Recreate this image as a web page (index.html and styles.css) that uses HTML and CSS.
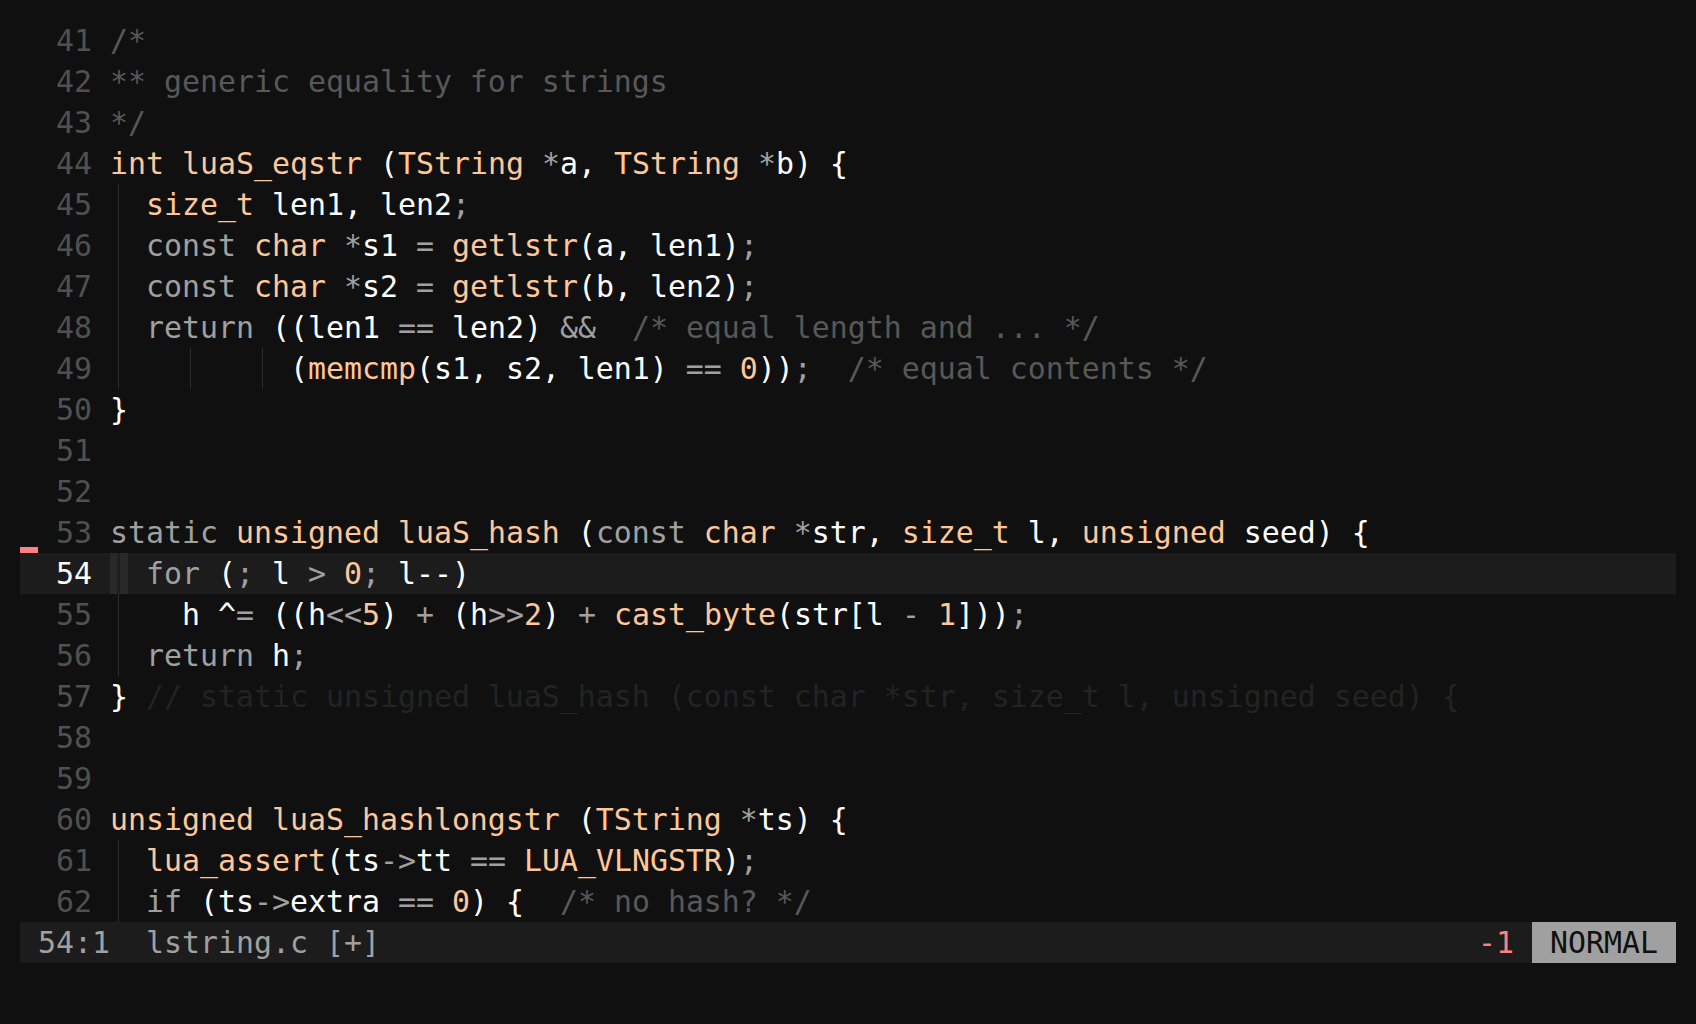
FILE: index.html
```html
<!DOCTYPE html>
<html>
<head>
<meta charset="utf-8">
<link rel="stylesheet" href="styles.css">
</head>
<body>
<div class="editor">
  <div class="buffer">
    <div class="row"><span class="sign"></span><span class="nr">41</span><span class="code"><span class="c">/*</span></span></div>
    <div class="row"><span class="sign"></span><span class="nr">42</span><span class="code"><span class="c">** generic equality for strings</span></span></div>
    <div class="row"><span class="sign"></span><span class="nr">43</span><span class="code"><span class="c">*/</span></span></div>
    <div class="row"><span class="sign"></span><span class="nr">44</span><span class="code"><span class="t">int</span> <span class="t">luaS_eqstr</span> (<span class="t">TString</span> <span class="k">*</span>a, <span class="t">TString</span> <span class="k">*</span>b) {</span></div>
    <div class="row"><span class="sign"></span><span class="nr">45</span><span class="code"><span class="ig">  </span><span class="t">size_t</span> len1, len2<span class="k">;</span></span></div>
    <div class="row"><span class="sign"></span><span class="nr">46</span><span class="code"><span class="ig">  </span><span class="k">const</span> <span class="t">char</span> <span class="k">*</span>s1 <span class="k">=</span> <span class="t">getlstr</span>(a, len1)<span class="k">;</span></span></div>
    <div class="row"><span class="sign"></span><span class="nr">47</span><span class="code"><span class="ig">  </span><span class="k">const</span> <span class="t">char</span> <span class="k">*</span>s2 <span class="k">=</span> <span class="t">getlstr</span>(b, len2)<span class="k">;</span></span></div>
    <div class="row"><span class="sign"></span><span class="nr">48</span><span class="code"><span class="ig">  </span><span class="k">return</span> ((len1 <span class="k">==</span> len2) <span class="k">&amp;&amp;</span>  <span class="c">/* equal length and ... */</span></span></div>
    <div class="row"><span class="sign"></span><span class="nr">49</span><span class="code"><span class="ig">    </span><span class="ig">    </span><span class="ig">  </span>(<span class="t">memcmp</span>(s1, s2, len1) <span class="k">==</span> <span class="n">0</span>))<span class="k">;</span>  <span class="c">/* equal contents */</span></span></div>
    <div class="row"><span class="sign"></span><span class="nr">50</span><span class="code">}</span></div>
    <div class="row"><span class="sign"></span><span class="nr">51</span><span class="code"></span></div>
    <div class="row"><span class="sign"></span><span class="nr">52</span><span class="code"></span></div>
    <div class="row"><span class="sign mark"></span><span class="nr">53</span><span class="code"><span class="k">static</span> <span class="t">unsigned</span> <span class="t">luaS_hash</span> (<span class="k">const</span> <span class="t">char</span> <span class="k">*</span>str, <span class="t">size_t</span> l, <span class="t">unsigned</span> seed) {</span></div>
    <div class="row current"><span class="sign"></span><span class="nr">54</span><span class="code"><span class="cur"> </span> <span class="k">for</span> (<span class="k">;</span> l <span class="k">&gt;</span> <span class="n">0</span><span class="k">;</span> l--)</span></div>
    <div class="row"><span class="sign"></span><span class="nr">55</span><span class="code"><span class="ig">    </span>h ^<span class="k">=</span> ((h<span class="k">&lt;&lt;</span><span class="n">5</span>) <span class="k">+</span> (h<span class="k">&gt;&gt;</span><span class="n">2</span>) <span class="k">+</span> <span class="t">cast_byte</span>(str[l <span class="k">-</span> <span class="n">1</span>]))<span class="k">;</span></span></div>
    <div class="row"><span class="sign"></span><span class="nr">56</span><span class="code"><span class="ig">  </span><span class="k">return</span> h<span class="k">;</span></span></div>
    <div class="row"><span class="sign"></span><span class="nr">57</span><span class="code">} <span class="v">// static unsigned luaS_hash (const char *str, size_t l, unsigned seed) {</span></span></div>
    <div class="row"><span class="sign"></span><span class="nr">58</span><span class="code"></span></div>
    <div class="row"><span class="sign"></span><span class="nr">59</span><span class="code"></span></div>
    <div class="row"><span class="sign"></span><span class="nr">60</span><span class="code"><span class="t">unsigned</span> <span class="t">luaS_hashlongstr</span> (<span class="t">TString</span> <span class="k">*</span>ts) {</span></div>
    <div class="row"><span class="sign"></span><span class="nr">61</span><span class="code"><span class="ig">  </span><span class="t">lua_assert</span>(ts<span class="k">-&gt;</span>tt <span class="k">==</span> <span class="t">LUA_VLNGSTR</span>)<span class="k">;</span></span></div>
    <div class="row"><span class="sign"></span><span class="nr">62</span><span class="code"><span class="ig">  </span><span class="k">if</span> (ts<span class="k">-&gt;</span>extra <span class="k">==</span> <span class="n">0</span>) {  <span class="c">/* no hash? */</span></span></div>
  </div>
  <div class="status">
    <span class="left"> 54:1  lstring.c [+]</span>
    <span class="right"><span class="err">-1 </span><span class="mode"> NORMAL </span></span>
  </div>
</div>
</body>
</html>
```

FILE: styles.css
```css
html, body {
  margin: 0;
  padding: 0;
  background: #101010;
}

.editor {
  padding: 20px;
  font-family: "DejaVu Sans Mono", "Liberation Mono", monospace;
  font-size: 29.9px;
  color: #ffffff;
  width: 1656px;
}

.buffer {
  display: flex;
  flex-direction: column;
}

.row {
  display: flex;
  height: 41px;
  line-height: 41px;
  white-space: pre;
}

.row.current {
  background: #1c1c1c;
}

.sign {
  width: 2ch;
  flex: none;
}

.sign.mark {
  background: linear-gradient(#ff8080, #ff8080) no-repeat left bottom / 1ch 6px;
}

.nr {
  width: 2ch;
  flex: none;
  text-align: right;
  color: #505050;
}

.current .nr {
  color: #ffffff;
}

.code {
  margin-left: 1ch;
  white-space: pre;
}

.ig {
  display: inline-block;
  background: linear-gradient(#2c2c2c, #2c2c2c) no-repeat 8px 0 / 1px 100%;
}

.cur {
  display: inline-block;
  background: linear-gradient(#1f1f1f, #1f1f1f) no-repeat 7px 0 / 3px 100%, #292929;
}

.k { color: #a0a0a0; }
.t { color: #ffc799; }
.n { color: #ffc799; }
.c { color: #585858; }
.v { color: #232323; }

.status {
  display: flex;
  justify-content: space-between;
  height: 41px;
  line-height: 41px;
  background: #1c1c1c;
  white-space: pre;
}

.status .left {
  color: #a0a0a0;
}

.status .right {
  display: flex;
}

.err {
  color: #ff8080;
}

.mode {
  background: #a0a0a0;
  color: #101010;
}
```
